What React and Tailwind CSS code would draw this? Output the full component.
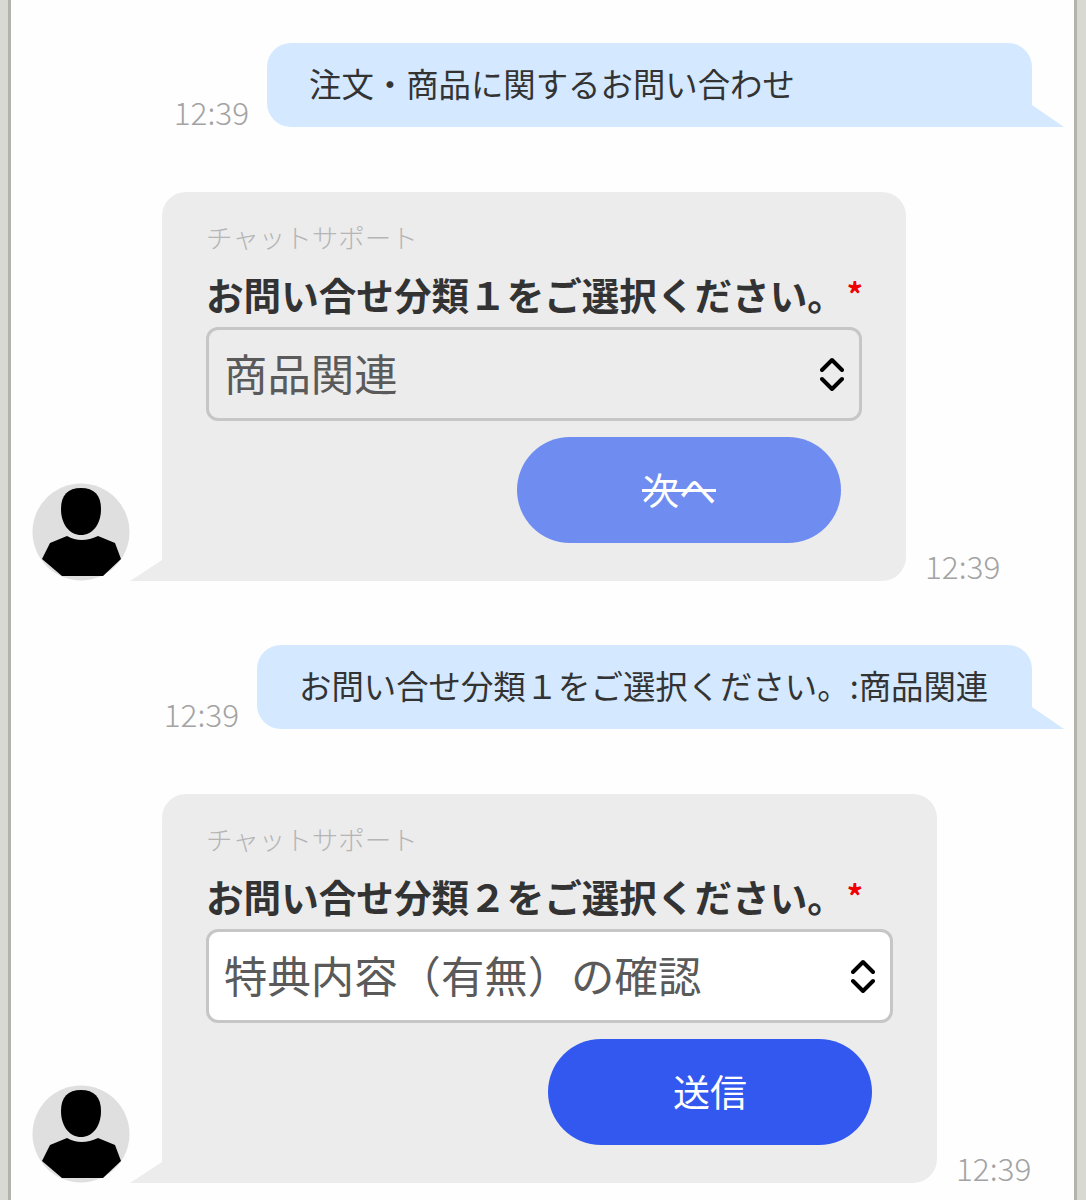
import React from 'react';

const font = { fontFamily: '"Noto Sans CJK JP", "Noto Sans", sans-serif' };

function Time({ className = '' }) {
  return <span className={`text-[31.5px] leading-[36px] font-light text-[#a3a3a3] ${className}`}>12:39</span>;
}

function Avatar() {
  return (
    <svg viewBox="0 0 98 98" className="w-[98px] h-[98px] shrink-0">
      <circle cx="49" cy="49" r="48.5" fill="#dfdfdf" />
      <path d="M49 5 C62 5 69 12 69 26 C69 42 60 52 49 52 C38 52 29 42 29 26 C29 12 36 5 49 5 Z" fill="#000" />
      <path d="M10 76 L18 60 L35 53 Q49 61 66 53 L83 60 L89 76 L71 93 L30 93 Z" fill="#000" />
    </svg>
  );
}

function Chevrons() {
  return (
    <svg viewBox="0 0 24 34" className="w-[24px] h-[34px]" fill="none" stroke="#000" strokeWidth="4" strokeLinecap="round" strokeLinejoin="round">
      <path d="M2 13 L12 3 L22 13" />
      <path d="M2 22 L12 32 L22 22" />
    </svg>
  );
}

function UserBubble({ width, children }) {
  return (
    <div className="flex justify-end items-end pr-[42px]">
      <Time className="mr-[18px] mb-[-2px]" />
      <div className={`relative h-[84px] pl-[42px] pb-[4px] flex items-center bg-[#d4e9ff] rounded-t-[24px] rounded-bl-[24px] text-[32.4px] text-[#333] ${width}`}>
        <span className="whitespace-nowrap">{children}</span>
        <div className="absolute left-full bottom-0 w-[32px] h-[22px] bg-[#d4e9ff] [clip-path:polygon(0_0,100%_100%,0_100%)]" />
      </div>
    </div>
  );
}

function BotBubble({ n, value, width, selectBg, buttonClass, label }) {
  return (
    <div className="flex items-end pl-[21px]">
      <Avatar />
      <div className={`relative ml-[32px] pt-[26px] pb-[38px] px-[44px] bg-[#ececec] rounded-t-[24px] rounded-br-[24px] ${width}`}>
        <div className="absolute right-full bottom-0 w-[32px] h-[21px] bg-[#ececec] [clip-path:polygon(100%_0,100%_100%,0_100%)]" />
        <div className="text-[26.5px] leading-[38px] font-light text-[#b5b5b5] whitespace-nowrap">チャットサポート</div>
        <div className="flex h-[60px] mt-[8px] items-center whitespace-nowrap">
          <span className="text-[37.6px] leading-[60px] font-bold text-[#333]">お問い合せ分類{n}をご選択ください。</span>
          <span className="ml-[2px] mb-[2px] text-[32px] leading-[30px] font-bold text-[#f00000]">*</span>
        </div>
        <div className={`h-[94px] mt-[3px] flex items-center justify-between pl-[15px] pr-[15px] border-[3px] border-[#c6c6c6] rounded-[12px] ${selectBg}`}>
          <span className="text-[43.4px] pb-[2px] text-[#5a5a5a] whitespace-nowrap">{value}</span>
          <Chevrons />
        </div>
        <div className="flex justify-end mt-[16px] mr-[21px]">
          <div className={`w-[324px] h-[106px] rounded-full flex items-center justify-center text-[37px] text-white ${buttonClass}`}>
            {label}
          </div>
        </div>
      </div>
      <Time className="ml-[19px] mb-[-2px]" />
    </div>
  );
}

export default function App() {
  return (
    <div style={font} className="flex h-[1200px] w-[1086px] overflow-hidden bg-[#fefefe]">
      <div className="w-[11px] shrink-0 bg-[#d9d9d3] border-r-[3px] border-[#b3b3ab]" />
      <div className="flex-1 flex flex-col pt-[43px]">
        <UserBubble width="w-[765px]">注文・商品に関するお問い合わせ</UserBubble>
        <div className="mt-[65px]">
          <BotBubble
            n="１"
            value="商品関連"
            width="w-[744px]"
            selectBg="bg-[#ececec]"
            buttonClass="bg-[#6f8cf0] line-through"
            label="次へ"
          />
        </div>
        <div className="mt-[64px]">
          <UserBubble width="w-[775px]">お問い合せ分類１をご選択ください。:商品関連</UserBubble>
        </div>
        <div className="mt-[65px]">
          <BotBubble
            n="２"
            value="特典内容（有無）の確認"
            width="w-[775px]"
            selectBg="bg-white"
            buttonClass="bg-[#3358f0]"
            label="送信"
          />
        </div>
      </div>
      <div className="w-[12px] shrink-0 bg-[#d9d9d3] border-l-[3px] border-[#b3b3ab]" />
    </div>
  );
}
